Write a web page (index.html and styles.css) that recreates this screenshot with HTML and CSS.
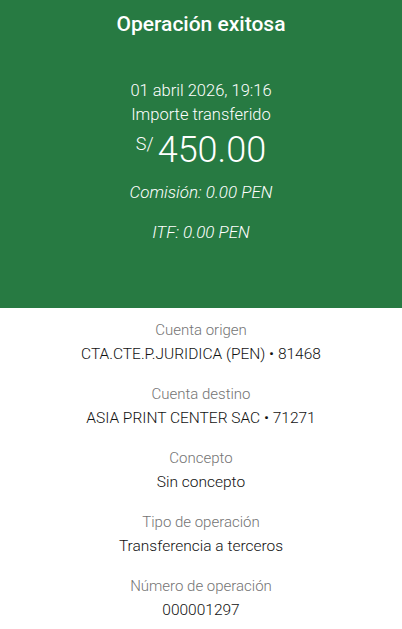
FILE: index.html
```html
<!DOCTYPE html>
<html lang="es">
<head>
    <meta charset="UTF-8">
    <meta name="viewport" content="width=device-width, initial-scale=1.0">
    <title>Operación exitosa</title>
    <link rel="stylesheet" href="styles.css">
</head>
<body>
    <div class="receipt">
        <div class="header">
            <h1>Operación exitosa</h1>
            <div class="summary">
                <p class="date">01 abril 2026, 19:16</p>
                <p class="caption">Importe transferido</p>
                <p class="amount"><span class="currency">S/</span>450.00</p>
                <p class="fee">Comisión: 0.00 PEN</p>
                <p class="fee">ITF: 0.00 PEN</p>
            </div>
        </div>
        <ul class="details">
            <li>
                <span class="label">Cuenta origen</span>
                <span class="value">CTA.CTE.P.JURIDICA (PEN) • 81468</span>
            </li>
            <li>
                <span class="label">Cuenta destino</span>
                <span class="value">ASIA PRINT CENTER SAC • 71271</span>
            </li>
            <li>
                <span class="label">Concepto</span>
                <span class="value">Sin concepto</span>
            </li>
            <li>
                <span class="label">Tipo de operación</span>
                <span class="value">Transferencia a terceros</span>
            </li>
            <li>
                <span class="label">Número de operación</span>
                <span class="value">000001297</span>
            </li>
        </ul>
    </div>
</body>
</html>
```

FILE: styles.css
```css
body {
    font-family: 'Roboto', 'Liberation Sans', sans-serif;
    font-weight: 300;
    background-color: #fff;
    margin: 0;
    padding: 0;
}
.receipt {
    width: 402px;
    text-align: center;
}
.header {
    background-color: #277a42;
    color: #fff;
    height: 308px;
    padding-top: 10px;
    box-sizing: border-box;
}
h1 {
    font-size: 21px;
    font-weight: 500;
    line-height: 28px;
    margin: 0;
}
.summary {
    margin-top: 41px;
}
.summary p {
    margin: 0;
}
.date, .caption {
    font-size: 16.5px;
    line-height: 24px;
}
.amount {
    font-size: 36px;
    line-height: 34px;
    margin-top: 0;
}
.currency {
    font-size: 18px;
    vertical-align: 12px;
    margin-right: 4px;
}
.summary .fee {
    font-size: 17px;
    font-style: italic;
    line-height: 24px;
    margin-top: 16px;
}
.summary .amount + .fee {
    margin-top: 13px;
}
.details {
    list-style-type: none;
    margin: 0;
    padding: 10px 0 0;
}
.details li {
    display: flex;
    flex-direction: column;
    margin-bottom: 16px;
}
.label {
    font-size: 15px;
    line-height: 24px;
    color: #747474;
}
.value {
    font-size: 15.5px;
    line-height: 24px;
    color: #121212;
}
```
